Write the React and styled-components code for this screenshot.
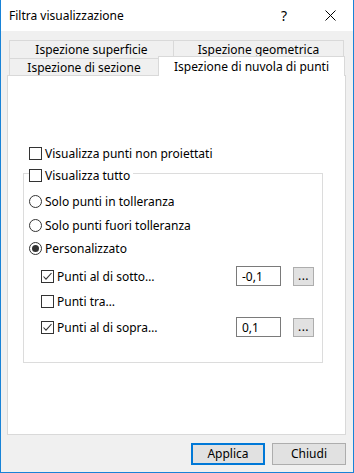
import React, { useState } from 'react';
import styled, { createGlobalStyle } from 'styled-components';

const GlobalStyle = createGlobalStyle`
  html, body {
    margin: 0;
    padding: 0;
    background: #ffffff;
  }
  body {
    font-family: "Noto Sans", "Liberation Sans", sans-serif;
    font-size: 12px;
    color: #000;
  }
`;

const Window = styled.div`
  width: 354px;
  height: 473px;
  box-sizing: border-box;
  border: 1px solid #1883d7;
  border-top: none;
  display: flex;
  flex-direction: column;
  background: #f0f0f0;
`;

const TitleBar = styled.div`
  height: 31px;
  background: #ffffff;
  display: flex;
  align-items: center;
  padding-left: 8px;
  flex-shrink: 0;
`;

const Title = styled.div`
  flex: 1;
  font-size: 12px;
  margin-top: -1px;
`;

const TitleButton = styled.div`
  width: 46px;
  height: 31px;
  display: flex;
  align-items: center;
  justify-content: center;
  font-size: 14px;
`;

const Body = styled.div`
  flex: 1;
  display: flex;
  flex-direction: column;
  padding: 9px 7px 0 6px;
`;

const TabRow = styled.div`
  display: flex;
  padding-left: 2px;
  height: ${p => p.h}px;
`;

const Tab = styled.div`
  width: ${p => p.w}px;
  box-sizing: border-box;
  border: 1px solid #d9d9d9;
  border-bottom: none;
  background: ${p => (p.active ? '#ffffff' : '#f0f0f0')};
  display: flex;
  align-items: center;
  justify-content: center;
  white-space: nowrap;
  & + & {
    margin-left: -1px;
  }
  ${p =>
    p.active &&
    `
    position: relative;
    z-index: 2;
    height: 20px;
    margin-top: -2px;
    align-items: flex-start;
    padding-top: 1px;
  `}
`;

const Panel = styled.div`
  height: 360px;
  box-sizing: border-box;
  border: 1px solid #d9d9d9;
  background: #ffffff;
  padding: 67px 22px 0 15px;
  display: flex;
  flex-direction: column;
`;

const Row = styled.label`
  display: flex;
  align-items: center;
  height: ${p => p.h || 24}px;
  margin-top: ${p => p.mt || 0}px;
  padding-left: ${p => p.indent || 0}px;
  gap: 3px;
  white-space: nowrap;
`;

const Box = styled.span`
  width: 13px;
  height: 13px;
  box-sizing: border-box;
  border: 1px solid #333333;
  background: #ffffff;
  display: inline-flex;
  align-items: center;
  justify-content: center;
  flex-shrink: 0;
`;

const Radio = styled(Box)`
  border-radius: 50%;
`;

const Dot = styled.span`
  width: 7px;
  height: 7px;
  border-radius: 50%;
  background: #333333;
`;

const GroupBox = styled.div`
  margin-top: 10px;
  border: 1px solid #dcdcdc;
  padding: 0 8px 23px 5px;
  display: flex;
  flex-direction: column;
`;

const Legend = styled(Row)`
  margin-top: -11px;
  align-self: flex-start;
  background: #ffffff;
  padding-right: 3px;
`;

const Label = styled.span`
  flex: 1;
`;

const ValueInput = styled.div`
  width: 45px;
  height: 20px;
  box-sizing: border-box;
  border: 1px solid #7a7a7a;
  background: #ffffff;
  padding-left: 5px;
  display: flex;
  align-items: center;
  margin-right: 9px;
`;

const DotsButton = styled.div`
  width: 21px;
  height: 19px;
  box-sizing: border-box;
  border: 1px solid #adadad;
  background: #e1e1e1;
  display: flex;
  align-items: center;
  justify-content: center;
  padding-bottom: 2px;
  letter-spacing: 0.5px;
`;

const Footer = styled.div`
  display: flex;
  justify-content: flex-end;
  gap: 7px;
  margin-top: 8px;
`;

const Button = styled.button`
  width: 74px;
  height: 22px;
  box-sizing: border-box;
  font-family: inherit;
  font-size: 12px;
  color: #000;
  background: #e1e1e1;
  border: ${p => (p.primary ? '2px solid #0078d7' : '1px solid #adadad')};
  padding: 0 0 1px;
`;

const Check = ({ checked }) => (
  <Box>
    {checked && (
      <svg width="11" height="11" viewBox="0 0 11 11">
        <path d="M1.5 5.5 L4 8.2 L9.5 2" fill="none" stroke="#333" strokeWidth="1.1" />
      </svg>
    )}
  </Box>
);

const RadioMark = ({ checked }) => <Radio>{checked && <Dot />}</Radio>;

export default function App() {
  const [mode] = useState('custom');

  return (
    <>
      <GlobalStyle />
      <Window>
        <TitleBar>
          <Title>Filtra visualizzazione</Title>
          <TitleButton>?</TitleButton>
          <TitleButton>
            <svg width="11" height="11" viewBox="0 0 11 11">
              <path d="M0.5 0.5 L10.5 10.5 M10.5 0.5 L0.5 10.5" stroke="#000" strokeWidth="1" />
            </svg>
          </TitleButton>
        </TitleBar>
        <Body>
          <TabRow h={18}>
            <Tab w={165}>Ispezione superficie</Tab>
            <Tab w={171}>Ispezione geometrica</Tab>
          </TabRow>
          <TabRow h={17}>
            <Tab w={150}>Ispezione di sezione</Tab>
            <Tab w={187} active>Ispezione di nuvola di punti</Tab>
          </TabRow>
          <Panel>
            <Row h={20} indent={6}>
              <Check />
              Visualizza punti non proiettati
            </Row>
            <GroupBox>
              <Legend>
                <Check />
                Visualizza tutto
              </Legend>
              <Row mt={2}>
                <RadioMark checked={mode === 'in'} />
                Solo punti in tolleranza
              </Row>
              <Row>
                <RadioMark checked={mode === 'out'} />
                Solo punti fuori tolleranza
              </Row>
              <Row mt={-1}>
                <RadioMark checked={mode === 'custom'} />
                Personalizzato
              </Row>
              <Row mt={4} indent={12}>
                <Check checked />
                <Label>Punti al di sotto…</Label>
                <ValueInput>-0,1</ValueInput>
                <DotsButton>...</DotsButton>
              </Row>
              <Row mt={1} indent={12}>
                <Check />
                <Label>Punti tra…</Label>
              </Row>
              <Row mt={2} indent={12}>
                <Check checked />
                <Label>Punti al di sopra…</Label>
                <ValueInput>0,1</ValueInput>
                <DotsButton>...</DotsButton>
              </Row>
            </GroupBox>
          </Panel>
          <Footer>
            <Button primary>Applica</Button>
            <Button>Chiudi</Button>
          </Footer>
        </Body>
      </Window>
    </>
  );
}
